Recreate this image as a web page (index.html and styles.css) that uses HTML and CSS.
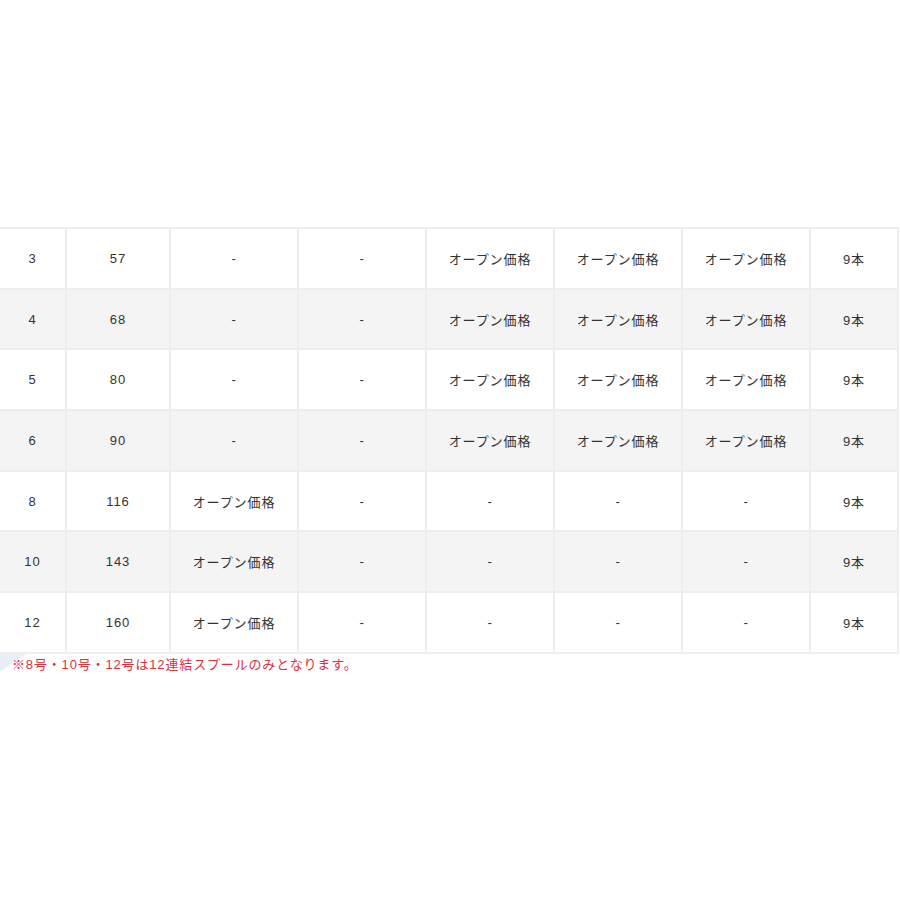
FILE: index.html
```html
<!DOCTYPE html>
<html lang="ja">
<head>
<meta charset="utf-8">
<title>スプール価格表</title>
<link rel="stylesheet" href="styles.css">
</head>
<body>
<div class="page">
  <table class="spec">
    <colgroup>
      <col class="c1"><col class="c2"><col class="c3"><col class="c4"><col class="c5"><col class="c6"><col class="c7"><col class="c8">
    </colgroup>
    <tbody>
      <tr><td>3</td><td>57</td><td>-</td><td>-</td><td>オープン価格</td><td>オープン価格</td><td>オープン価格</td><td>9本</td></tr>
      <tr class="alt"><td>4</td><td>68</td><td>-</td><td>-</td><td>オープン価格</td><td>オープン価格</td><td>オープン価格</td><td>9本</td></tr>
      <tr><td>5</td><td>80</td><td>-</td><td>-</td><td>オープン価格</td><td>オープン価格</td><td>オープン価格</td><td>9本</td></tr>
      <tr class="alt"><td>6</td><td>90</td><td>-</td><td>-</td><td>オープン価格</td><td>オープン価格</td><td>オープン価格</td><td>9本</td></tr>
      <tr><td>8</td><td>116</td><td>オープン価格</td><td>-</td><td>-</td><td>-</td><td>-</td><td>9本</td></tr>
      <tr class="alt"><td>10</td><td>143</td><td>オープン価格</td><td>-</td><td>-</td><td>-</td><td>-</td><td>9本</td></tr>
      <tr><td>12</td><td>160</td><td>オープン価格</td><td>-</td><td>-</td><td>-</td><td>-</td><td>9本</td></tr>
    </tbody>
  </table>
  <p class="note">※8号・10号・12号は12連結スプールのみとなります。</p>
</div>
</body>
</html>
```

FILE: styles.css
```css
html, body {
  margin: 0;
  padding: 0;
  background: #ffffff;
}
body {
  font-family: "Liberation Sans", Arial, "Noto Sans CJK JP", sans-serif;
  color: #333333;
}
.page {
  position: relative;
  padding-top: 227px;
  width: 900px;
}
.page::before {
  content: "";
  position: absolute;
  left: 0;
  top: 654px;
  width: 0;
  height: 0;
  border-top: 18px solid #e9edf5;
  border-right: 26px solid transparent;
}
.spec {
  border-collapse: collapse;
  table-layout: fixed;
  width: 899px;
  margin-left: -2px;
}
.c1 { width: 67px; }
.c2 { width: 104px; }
.c3 { width: 128px; }
.c4 { width: 128px; }
.c5 { width: 128px; }
.c6 { width: 128px; }
.c7 { width: 128px; }
.c8 { width: 88px; }
.spec td {
  border: 2px solid #eeeeee;
  height: 58.7px;
  padding: 0;
  text-align: center;
  vertical-align: middle;
  font-size: 13px;
  letter-spacing: 0.07em;
  background: #ffffff;
}
.spec tr.alt td {
  background: #f4f4f4;
}
.note {
  position: relative;
  margin: 2px 0 0 12px;
  font-size: 13px;
  line-height: 18px;
  color: #d6323d;
  letter-spacing: 0.065em;
}
```
